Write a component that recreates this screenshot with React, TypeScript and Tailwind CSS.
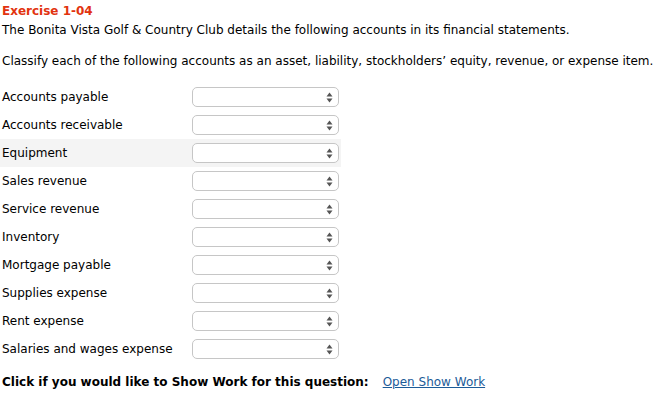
import React from "react";

const items = [
  "Accounts payable",
  "Accounts receivable",
  "Equipment",
  "Sales revenue",
  "Service revenue",
  "Inventory",
  "Mortgage payable",
  "Supplies expense",
  "Rent expense",
  "Salaries and wages expense",
];

function Arrows() {
  return (
    <svg width="7" height="11" viewBox="0 0 7 11" className="absolute right-[5px] top-[4px]">
      <path d="M3.5 0.5 L6.5 4.5 L0.5 4.5 Z" fill="#555" />
      <path d="M3.5 10.5 L6.5 6.5 L0.5 6.5 Z" fill="#555" />
    </svg>
  );
}

export default function App() {
  return (
    <div
      className="w-[665px] h-[417px] bg-white text-black text-[12px] leading-[18px]"
      style={{ fontFamily: '"DejaVu Sans", Verdana, sans-serif' }}
    >
      <div className="px-[2px] pt-[2px]">
        <div className="font-bold text-[#e2330f] text-[12px]">Exercise 1-04</div>
        <div className="mt-[1px] whitespace-nowrap">
          The Bonita Vista Golf &amp; Country Club details the following accounts in its financial statements.
        </div>
        <div className="mt-[13px] whitespace-nowrap">
          Classify each of the following accounts as an asset, liability, stockholders’ equity, revenue, or expense item.
        </div>
      </div>
      <div className="mt-[13px] w-[341px]">
        {items.map((it, i) => (
          <div
            key={it}
            className={`flex items-center h-[28px] ${i === 2 ? "bg-[#f4f4f4]" : ""}`}
          >
            <div className="w-[192px] pl-[2px]">{it}</div>
            <div className="relative w-[147px] h-[20px] rounded-[5px] border border-[#c6c6c6] bg-white">
              <Arrows />
            </div>
          </div>
        ))}
      </div>
      <div className="flex mt-[10px] pl-[2px]">
        <span className="font-bold">Click if you would like to Show Work for this question:</span>
        <span className="ml-[14px] text-[#1c5b98] underline">Open Show Work</span>
      </div>
    </div>
  );
}
